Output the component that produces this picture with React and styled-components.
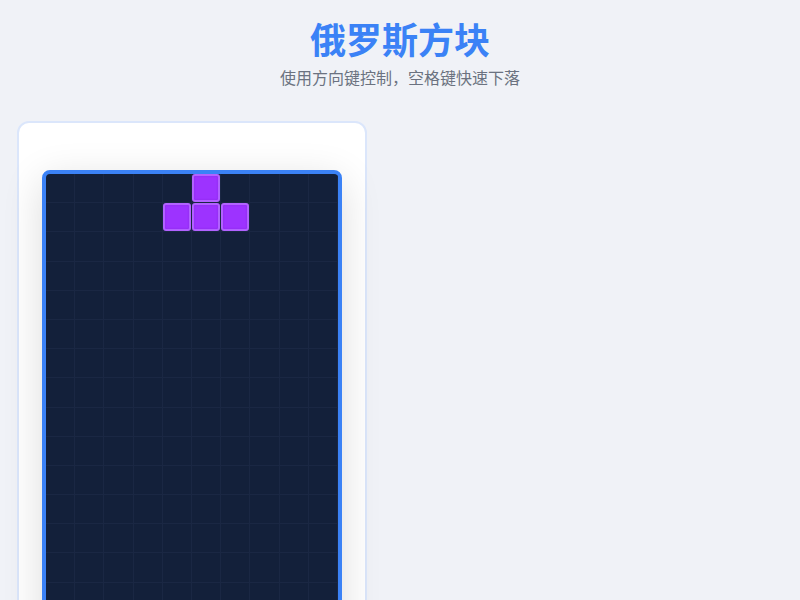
import React from "react";
import styled, { createGlobalStyle } from "styled-components";

const GlobalStyle = createGlobalStyle`
  body {
    margin: 0;
    background: #f0f2f7;
    font-family: "Noto Sans CJK SC", "Noto Sans", sans-serif;
  }
`;

const COLS = 10;
const ROWS = 20;
const CELL = 29.2;

const Page = styled.main`
  display: flex;
  flex-direction: column;
  align-items: center;
  padding-top: 16px;
`;

const Title = styled.h1`
  margin: 0;
  font-size: 36px;
  line-height: 44px;
  font-weight: 700;
  color: #3b82f6;
`;

const Subtitle = styled.p`
  margin: 5px 0 0;
  font-size: 16px;
  line-height: 24px;
  color: #6b7280;
`;

const Layout = styled.div`
  align-self: stretch;
  display: flex;
  padding: 32px 17px 0;
`;

const Card = styled.section`
  width: 350px;
  box-sizing: border-box;
  padding: 47px 23px 24px;
  background: #ffffff;
  border: 2px solid #dbe6fb;
  border-radius: 12px;
`;

const Board = styled.div`
  display: grid;
  grid-template-columns: repeat(${COLS}, ${CELL}px);
  grid-template-rows: repeat(${ROWS}, ${CELL}px);
  background: #13203a;
  border: 4px solid #3b82f6;
  border-radius: 8px;
  box-shadow: 0 10px 40px rgba(0, 0, 0, 0.14);
  overflow: hidden;
`;

const Cell = styled.div`
  box-sizing: border-box;
  border-right: 1px solid #1a2743;
  border-bottom: 1px solid #1a2743;
`;

const Block = styled.div`
  width: 100%;
  height: 100%;
  box-sizing: border-box;
  background: ${(p) => p.$color};
  border: 2px solid #b262ff;
  border-radius: 3px;
  box-shadow: inset 0 0 2px rgba(110, 20, 190, 0.45);
`;

// T piece spawning at the top
const PIECE = [
  [0, 5],
  [1, 4],
  [1, 5],
  [1, 6],
];

const App = () => {
  const filled = new Set(PIECE.map(([r, c]) => r * COLS + c));
  const cells = Array.from({ length: ROWS * COLS }, (_, i) => i);

  return (
    <>
      <GlobalStyle />
      <Page>
        <Title>俄罗斯方块</Title>
        <Subtitle>使用方向键控制，空格键快速下落</Subtitle>
        <Layout>
          <Card>
            <Board>
              {cells.map((i) => (
                <Cell key={i}>{filled.has(i) && <Block $color="#9d33ff" />}</Cell>
              ))}
            </Board>
          </Card>
        </Layout>
      </Page>
    </>
  );
};

export default App;
